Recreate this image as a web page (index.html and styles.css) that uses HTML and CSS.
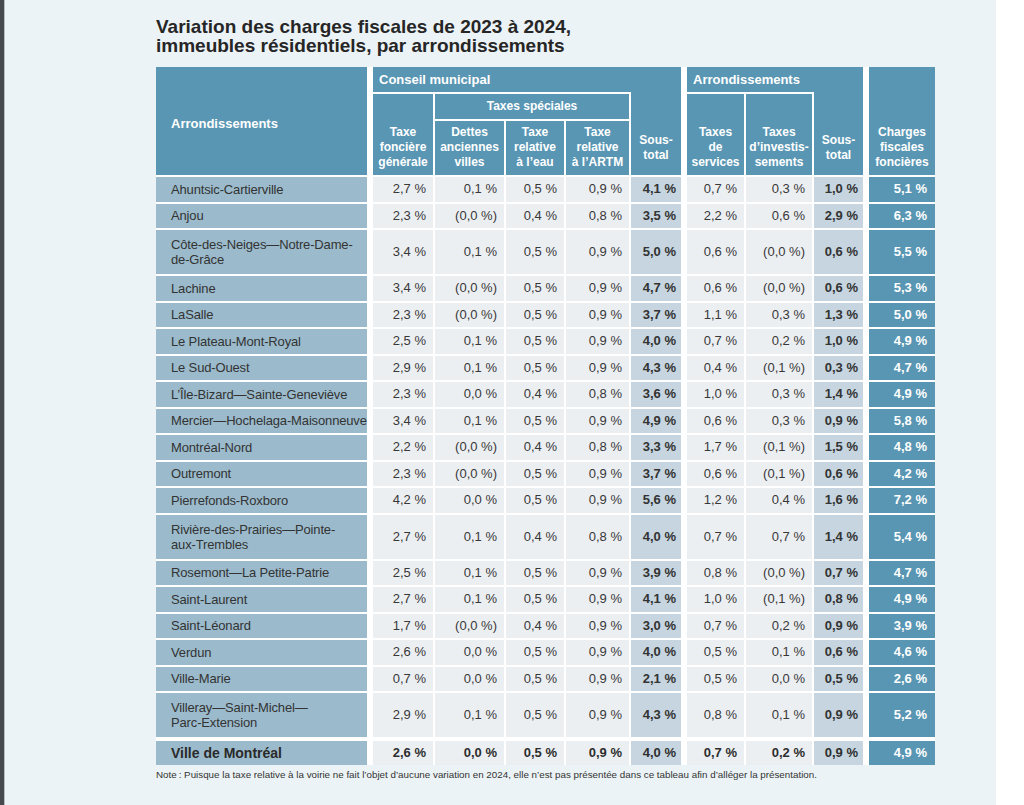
FILE: index.html
```html
<!DOCTYPE html>
<html lang="fr">
<head>
<meta charset="utf-8">
<title>Variation des charges fiscales</title>
<link rel="stylesheet" href="styles.css">
</head>
<body>
<div class="screen">
  <div class="edge"></div>
  <div class="sheet">
    <h1 class="title">Variation des charges fiscales de 2023 à 2024,<br>immeubles résidentiels, par arrondissements</h1>
    <table class="grid">
      <colgroup>
        <col class="c-name"><col class="c-gap"><col class="c-tf"><col class="c-det"><col class="c-eau"><col class="c-artm"><col class="c-st1"><col class="c-gap"><col class="c-serv"><col class="c-inv"><col class="c-st2"><col class="c-gap"><col class="c-chg">
      </colgroup>
      <thead>
        <tr class="h1">
          <th rowspan="3" class="h-name">Arrondissements</th>
          <th rowspan="3" class="gap"></th>
          <th colspan="4" class="grp">Conseil municipal</th>
          <th rowspan="3" class="h-st">Sous-<br>total</th>
          <th rowspan="3" class="gap"></th>
          <th colspan="2" class="grp">Arrondissements</th>
          <th rowspan="3" class="h-st">Sous-<br>total</th>
          <th rowspan="3" class="gap"></th>
          <th rowspan="3" class="h-last">Charges<br>fiscales<br>foncières</th>
        </tr>
        <tr class="h2">
          <th rowspan="2">Taxe<br>foncière<br>générale</th>
          <th colspan="3" class="h-mid">Taxes spéciales</th>
          <th rowspan="2">Taxes<br>de<br>services</th>
          <th rowspan="2">Taxes<br>d’investis-<br>sements</th>
        </tr>
        <tr class="h3">
          <th>Dettes<br>anciennes<br>villes</th>
          <th>Taxe<br>relative<br>à l’eau</th>
          <th>Taxe<br>relative<br>à l’ARTM</th>
        </tr>
      </thead>
      <tbody>
        <tr class="r1"><th class="name">Ahuntsic-Cartierville</th><td class="gap"></td><td>2,7&nbsp;%</td><td>0,1&nbsp;%</td><td>0,5&nbsp;%</td><td>0,9&nbsp;%</td><td class="st">4,1&nbsp;%</td><td class="gap"></td><td>0,7&nbsp;%</td><td>0,3&nbsp;%</td><td class="st">1,0&nbsp;%</td><td class="gap"></td><td class="chg">5,1&nbsp;%</td></tr>
        <tr class="r1"><th class="name">Anjou</th><td class="gap"></td><td>2,3&nbsp;%</td><td>(0,0&nbsp;%)</td><td>0,4&nbsp;%</td><td>0,8&nbsp;%</td><td class="st">3,5&nbsp;%</td><td class="gap"></td><td>2,2&nbsp;%</td><td>0,6&nbsp;%</td><td class="st">2,9&nbsp;%</td><td class="gap"></td><td class="chg">6,3&nbsp;%</td></tr>
        <tr class="r2"><th class="name">Côte-des-Neiges—Notre-Dame-<br>de-Grâce</th><td class="gap"></td><td>3,4&nbsp;%</td><td>0,1&nbsp;%</td><td>0,5&nbsp;%</td><td>0,9&nbsp;%</td><td class="st">5,0&nbsp;%</td><td class="gap"></td><td>0,6&nbsp;%</td><td>(0,0&nbsp;%)</td><td class="st">0,6&nbsp;%</td><td class="gap"></td><td class="chg">5,5&nbsp;%</td></tr>
        <tr class="r1"><th class="name">Lachine</th><td class="gap"></td><td>3,4&nbsp;%</td><td>(0,0&nbsp;%)</td><td>0,5&nbsp;%</td><td>0,9&nbsp;%</td><td class="st">4,7&nbsp;%</td><td class="gap"></td><td>0,6&nbsp;%</td><td>(0,0&nbsp;%)</td><td class="st">0,6&nbsp;%</td><td class="gap"></td><td class="chg">5,3&nbsp;%</td></tr>
        <tr class="r1"><th class="name">LaSalle</th><td class="gap"></td><td>2,3&nbsp;%</td><td>(0,0&nbsp;%)</td><td>0,5&nbsp;%</td><td>0,9&nbsp;%</td><td class="st">3,7&nbsp;%</td><td class="gap"></td><td>1,1&nbsp;%</td><td>0,3&nbsp;%</td><td class="st">1,3&nbsp;%</td><td class="gap"></td><td class="chg">5,0&nbsp;%</td></tr>
        <tr class="r1"><th class="name">Le Plateau-Mont-Royal</th><td class="gap"></td><td>2,5&nbsp;%</td><td>0,1&nbsp;%</td><td>0,5&nbsp;%</td><td>0,9&nbsp;%</td><td class="st">4,0&nbsp;%</td><td class="gap"></td><td>0,7&nbsp;%</td><td>0,2&nbsp;%</td><td class="st">1,0&nbsp;%</td><td class="gap"></td><td class="chg">4,9&nbsp;%</td></tr>
        <tr class="r1"><th class="name">Le Sud-Ouest</th><td class="gap"></td><td>2,9&nbsp;%</td><td>0,1&nbsp;%</td><td>0,5&nbsp;%</td><td>0,9&nbsp;%</td><td class="st">4,3&nbsp;%</td><td class="gap"></td><td>0,4&nbsp;%</td><td>(0,1&nbsp;%)</td><td class="st">0,3&nbsp;%</td><td class="gap"></td><td class="chg">4,7&nbsp;%</td></tr>
        <tr class="r1"><th class="name">L’Île-Bizard—Sainte-Geneviève</th><td class="gap"></td><td>2,3&nbsp;%</td><td>0,0&nbsp;%</td><td>0,4&nbsp;%</td><td>0,8&nbsp;%</td><td class="st">3,6&nbsp;%</td><td class="gap"></td><td>1,0&nbsp;%</td><td>0,3&nbsp;%</td><td class="st">1,4&nbsp;%</td><td class="gap"></td><td class="chg">4,9&nbsp;%</td></tr>
        <tr class="r1"><th class="name">Mercier—Hochelaga-Maisonneuve</th><td class="gap"></td><td>3,4&nbsp;%</td><td>0,1&nbsp;%</td><td>0,5&nbsp;%</td><td>0,9&nbsp;%</td><td class="st">4,9&nbsp;%</td><td class="gap"></td><td>0,6&nbsp;%</td><td>0,3&nbsp;%</td><td class="st">0,9&nbsp;%</td><td class="gap"></td><td class="chg">5,8&nbsp;%</td></tr>
        <tr class="r1"><th class="name">Montréal-Nord</th><td class="gap"></td><td>2,2&nbsp;%</td><td>(0,0&nbsp;%)</td><td>0,4&nbsp;%</td><td>0,8&nbsp;%</td><td class="st">3,3&nbsp;%</td><td class="gap"></td><td>1,7&nbsp;%</td><td>(0,1&nbsp;%)</td><td class="st">1,5&nbsp;%</td><td class="gap"></td><td class="chg">4,8&nbsp;%</td></tr>
        <tr class="r1"><th class="name">Outremont</th><td class="gap"></td><td>2,3&nbsp;%</td><td>(0,0&nbsp;%)</td><td>0,5&nbsp;%</td><td>0,9&nbsp;%</td><td class="st">3,7&nbsp;%</td><td class="gap"></td><td>0,6&nbsp;%</td><td>(0,1&nbsp;%)</td><td class="st">0,6&nbsp;%</td><td class="gap"></td><td class="chg">4,2&nbsp;%</td></tr>
        <tr class="r1"><th class="name">Pierrefonds-Roxboro</th><td class="gap"></td><td>4,2&nbsp;%</td><td>0,0&nbsp;%</td><td>0,5&nbsp;%</td><td>0,9&nbsp;%</td><td class="st">5,6&nbsp;%</td><td class="gap"></td><td>1,2&nbsp;%</td><td>0,4&nbsp;%</td><td class="st">1,6&nbsp;%</td><td class="gap"></td><td class="chg">7,2&nbsp;%</td></tr>
        <tr class="r2"><th class="name">Rivière-des-Prairies—Pointe-<br>aux-Trembles</th><td class="gap"></td><td>2,7&nbsp;%</td><td>0,1&nbsp;%</td><td>0,4&nbsp;%</td><td>0,8&nbsp;%</td><td class="st">4,0&nbsp;%</td><td class="gap"></td><td>0,7&nbsp;%</td><td>0,7&nbsp;%</td><td class="st">1,4&nbsp;%</td><td class="gap"></td><td class="chg">5,4&nbsp;%</td></tr>
        <tr class="r1"><th class="name">Rosemont—La Petite-Patrie</th><td class="gap"></td><td>2,5&nbsp;%</td><td>0,1&nbsp;%</td><td>0,5&nbsp;%</td><td>0,9&nbsp;%</td><td class="st">3,9&nbsp;%</td><td class="gap"></td><td>0,8&nbsp;%</td><td>(0,0&nbsp;%)</td><td class="st">0,7&nbsp;%</td><td class="gap"></td><td class="chg">4,7&nbsp;%</td></tr>
        <tr class="r1"><th class="name">Saint-Laurent</th><td class="gap"></td><td>2,7&nbsp;%</td><td>0,1&nbsp;%</td><td>0,5&nbsp;%</td><td>0,9&nbsp;%</td><td class="st">4,1&nbsp;%</td><td class="gap"></td><td>1,0&nbsp;%</td><td>(0,1&nbsp;%)</td><td class="st">0,8&nbsp;%</td><td class="gap"></td><td class="chg">4,9&nbsp;%</td></tr>
        <tr class="r1"><th class="name">Saint-Léonard</th><td class="gap"></td><td>1,7&nbsp;%</td><td>(0,0&nbsp;%)</td><td>0,4&nbsp;%</td><td>0,9&nbsp;%</td><td class="st">3,0&nbsp;%</td><td class="gap"></td><td>0,7&nbsp;%</td><td>0,2&nbsp;%</td><td class="st">0,9&nbsp;%</td><td class="gap"></td><td class="chg">3,9&nbsp;%</td></tr>
        <tr class="r1"><th class="name">Verdun</th><td class="gap"></td><td>2,6&nbsp;%</td><td>0,0&nbsp;%</td><td>0,5&nbsp;%</td><td>0,9&nbsp;%</td><td class="st">4,0&nbsp;%</td><td class="gap"></td><td>0,5&nbsp;%</td><td>0,1&nbsp;%</td><td class="st">0,6&nbsp;%</td><td class="gap"></td><td class="chg">4,6&nbsp;%</td></tr>
        <tr class="r1"><th class="name">Ville-Marie</th><td class="gap"></td><td>0,7&nbsp;%</td><td>0,0&nbsp;%</td><td>0,5&nbsp;%</td><td>0,9&nbsp;%</td><td class="st">2,1&nbsp;%</td><td class="gap"></td><td>0,5&nbsp;%</td><td>0,0&nbsp;%</td><td class="st">0,5&nbsp;%</td><td class="gap"></td><td class="chg">2,6&nbsp;%</td></tr>
        <tr class="r2"><th class="name">Villeray—Saint-Michel—<br>Parc-Extension</th><td class="gap"></td><td>2,9&nbsp;%</td><td>0,1&nbsp;%</td><td>0,5&nbsp;%</td><td>0,9&nbsp;%</td><td class="st">4,3&nbsp;%</td><td class="gap"></td><td>0,8&nbsp;%</td><td>0,1&nbsp;%</td><td class="st">0,9&nbsp;%</td><td class="gap"></td><td class="chg">5,2&nbsp;%</td></tr>
        <tr class="total"><th class="name">Ville de Montréal</th><td class="gap"></td><td>2,6&nbsp;%</td><td>0,0&nbsp;%</td><td>0,5&nbsp;%</td><td>0,9&nbsp;%</td><td class="st">4,0&nbsp;%</td><td class="gap"></td><td>0,7&nbsp;%</td><td>0,2&nbsp;%</td><td class="st">0,9&nbsp;%</td><td class="gap"></td><td class="chg">4,9&nbsp;%</td></tr>
      </tbody>
    </table>
    <p class="note">Note&#8239;: Puisque la taxe relative à la voirie ne fait l’objet d’aucune variation en 2024, elle n’est pas présentée dans ce tableau afin d’alléger la présentation.</p>
  </div>
  <div class="blank"></div>
</div>
</body>
</html>
```

FILE: styles.css
```css
* { box-sizing: border-box; }

body {
  margin: 0;
  font-family: "Liberation Sans", Arial, sans-serif;
  color: #353535;
}

.screen {
  display: flex;
  width: 1024px;
  height: 805px;
  overflow: hidden;
}

.edge {
  width: 5px;
  background: #46494e;
  border-right: 1px solid #b7bfc4;
}

.sheet {
  width: 991px;
  background: #ecf3f6;
  padding: 17px 0 0 151px;
}

.blank {
  flex: 1;
  background: #ffffff;
}

.title {
  margin: 0;
  font-size: 19px;
  line-height: 19px;
  font-weight: 700;
  color: #262626;
}

.grid {
  margin-top: 12px;
  width: 779px;
  table-layout: fixed;
  border-collapse: separate;
  border-spacing: 0;
  background: #ffffff;
}

.c-name { width: 211px; }
.c-gap { width: 6px; }
.c-tf { width: 62px; }
.c-det { width: 71px; }
.c-eau { width: 60px; }
.c-artm { width: 65px; }
.c-st1 { width: 50px; }
.c-serv { width: 59px; }
.c-inv { width: 68px; }
.c-st2 { width: 49px; }
.c-chg { width: 66px; }

.grid th,
.grid td {
  padding: 0;
  border-right: 2px solid #ffffff;
  border-bottom: 2px solid #ffffff;
}

.grid .gap {
  background: transparent;
  border-right: 0;
}

/* header */
.grid thead th {
  background: #5996b3;
  color: #ffffff;
  font-weight: 700;
  font-size: 12px;
  line-height: 15px;
  text-align: center;
  vertical-align: bottom;
  padding: 0 1px 5px;
}

.grid thead th.gap { background: transparent; }

.h1 { height: 27px; }
.h2 { height: 27px; }
.h3 { height: 56px; }

.grid thead th.h-name {
  font-size: 13px;
  text-align: left;
  vertical-align: middle;
  padding: 5px 0 0 15px;
  border-right: 0;
}

.grid thead th.grp {
  font-size: 13px;
  text-align: left;
  vertical-align: middle;
  padding: 0 0 0 6px;
  border-right: 0;
}

.grid thead th.h-mid {
  font-size: 12px;
  vertical-align: middle;
  padding: 0;
}

.grid thead th.h-st {
  border-right: 0;
  padding-bottom: 12px;
}

.grid thead th.h-last {
  border-right: 0;
}

/* body */
.r1 { height: 26.5px; }
.r2 { height: 46px; }

.grid tbody td {
  background: #eceff2;
  font-size: 13px;
  line-height: 16px;
  text-align: right;
  vertical-align: middle;
  padding-right: 7px;
  white-space: nowrap;
  color: #383838;
}

.grid tbody th.name {
  background: #9bbbcc;
  font-weight: 400;
  font-size: 13px;
  line-height: 15px;
  text-align: left;
  vertical-align: middle;
  padding-left: 15px;
  border-right: 0;
  white-space: nowrap;
  letter-spacing: -0.15px;
  color: #333333;
}

.grid tbody td.gap { background: transparent; }

.grid tbody td.st {
  background: #c6d5df;
  font-weight: 700;
  padding-right: 5px;
  border-right: 0;
  color: #333333;
}

.grid tbody td.chg {
  background: #5996b3;
  color: #ffffff;
  font-weight: 700;
  padding-right: 8px;
  border-right: 0;
}

.grid tbody tr.total { height: 26px; }

.grid tbody tr.total th,
.grid tbody tr.total td {
  border-top: 2px solid #ffffff;
  border-bottom: 0;
}

.grid tbody tr.total td { font-weight: 700; color: #2e2e2e; }
.grid tbody tr.total td.chg { color: #ffffff; }

.grid tbody tr.total th.name {
  font-weight: 700;
  font-size: 14px;
  letter-spacing: 0;
  color: #2a2a2a;
}

.note {
  margin: 4px 0 0;
  font-size: 9.8px;
  line-height: 12px;
  color: #333333;
}
```
